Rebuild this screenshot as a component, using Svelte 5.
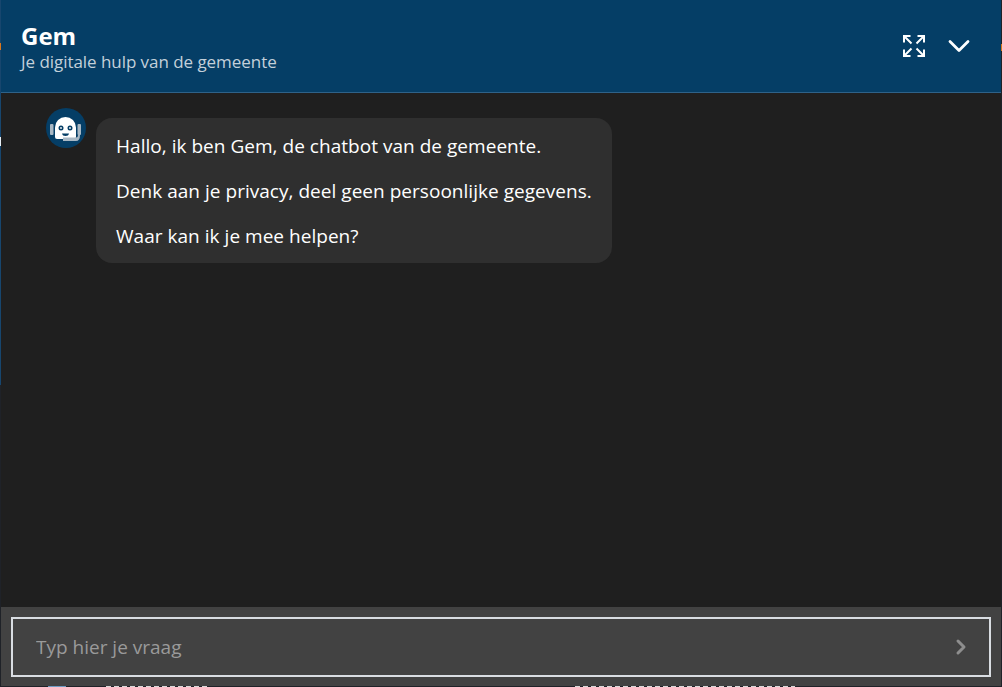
<script lang="ts">
  const messages = [
    "Hallo, ik ben Gem, de chatbot van de gemeente.",
    "Denk aan je privacy, deel geen persoonlijke gegevens.",
    "Waar kan ik je mee helpen?",
  ];
</script>

<div class="page">
  <div class="widget">
    <header class="head">
      <div class="titles">
        <h1>Gem</h1>
        <p>Je digitale hulp van de gemeente</p>
      </div>
      <div class="actions">
        <button aria-label="Vergroten">
          <svg width="22" height="22" viewBox="0 0 22 22" fill="none" stroke="#fff" stroke-width="2">
            <path d="M1 7.500V1h6.500M2 2l6.500 6.500" />
            <path d="M21 7.500V1h-6.500M20 2l-6.500 6.500" />
            <path d="M1 14.500V21h6.500M2 20l6.500-6.500" />
            <path d="M21 14.500V21h-6.500M20 20l-6.500-6.500" />
          </svg>
        </button>
        <button aria-label="Sluiten">
          <svg width="22" height="14" viewBox="0 0 22 14" fill="none">
            <path d="M2 2.500l9 9 9-9" stroke="#fff" stroke-width="2.800" stroke-linecap="round" stroke-linejoin="round" />
          </svg>
        </button>
      </div>
    </header>

    <main class="chat">
      <div class="avatar">
        <svg width="40" height="40" viewBox="0 0 40 40">
          <circle cx="20" cy="20" r="20" fill="#053e66" />
          <rect x="4" y="16" width="3.500" height="11" rx="1" fill="#a9b8c4" />
          <rect x="31.500" y="16" width="3.500" height="11" rx="1" fill="#a9b8c4" />
          <path d="M9 19.500a10.500 10.500 0 0 1 21 0v9q0 2.500-2.500 2.500H11q-2 0-2-2z" fill="#fff" />
          <circle cx="15" cy="20" r="2.500" fill="#053e66" />
          <circle cx="24" cy="20" r="2.500" fill="#053e66" />
          <circle cx="15" cy="20" r="0.900" fill="#fff" />
          <circle cx="24" cy="20" r="0.900" fill="#fff" />
          <path d="M16 25.500h7q-0.500 2.500-3.500 2.500t-3.500-2.500z" fill="#053e66" />
          <path d="M17 29.500h13q2 0 2-2.500h2q0 6-4 6H17z" fill="#a9b8c4" />
        </svg>
      </div>
      <div class="bubble">
        {#each messages as line}
          <p>{line}</p>
        {/each}
      </div>
    </main>

    <footer class="foot">
      <div class="field">
        <input type="text" placeholder="Typ hier je vraag" />
        <svg width="12" height="18" viewBox="0 0 12 18" fill="none">
          <path d="M3 3l6 6-6 6" stroke="#8e8e8e" stroke-width="3" stroke-linecap="round" stroke-linejoin="round" />
        </svg>
      </div>
    </footer>
  </div>
  <!-- sliver of the page behind the widget -->
  <div class="behind" aria-hidden="true">
    <span class="mark"></span>
    <span class="dash a"></span>
    <span class="dash b"></span>
  </div>
</div>

<style>
  :global(body) {
    margin: 0;
    background: #1f2228;
    font-family: "Open Sans", "Noto Sans", sans-serif;
  }

  .page {
    position: relative;
    height: 687px;
    overflow: hidden;
    padding-left: 1px;
    box-sizing: border-box;
    background:
      linear-gradient(#e8eef4, #e8eef4) 0 137px / 1px 9px no-repeat,
      linear-gradient(#d9761c, #d9761c) 0 43px / 1px 7px no-repeat,
      linear-gradient(#d9761c, #d9761c) 1001px 44px / 1px 7px no-repeat,
      linear-gradient(#17466e, #17466e) 0 0 / 1px 385px no-repeat,
      #1f2228;
  }

  .widget {
    width: 1000px;
    height: 686px;
    display: flex;
    flex-direction: column;
    background: #1f1f1f;
  }

  .head {
    height: 92px;
    flex: none;
    display: flex;
    align-items: center;
    justify-content: space-between;
    padding: 0 31px 0 20px;
    background: #053e66;
    border-bottom: 1px solid #2f6288;
  }

  .titles {
    padding-top: 3px;
  }

  h1 {
    margin: 0;
    font-size: 24px;
    line-height: 28px;
    font-weight: 700;
    color: #fff;
  }

  .titles p {
    margin: 0;
    font-size: 17px;
    line-height: 24px;
    letter-spacing: -0.05px;
    color: #c3d0da;
  }

  .actions {
    display: flex;
    align-items: center;
    gap: 23px;
  }

  button {
    display: flex;
    padding: 0;
    border: 0;
    background: none;
  }

  .chat {
    flex: 1;
    display: flex;
    align-items: flex-start;
    gap: 10px;
    padding: 15px 0 0 45px;
  }

  .bubble {
    margin-top: 10px;
    padding: 16px 20px 15px;
    border-radius: 16px;
    background: #2f2f2f;
    color: #fff;
    font-size: 19px;
    line-height: 24px;
    letter-spacing: 0.03px;
  }

  .bubble p {
    margin: 0 0 21px;
  }

  .bubble p:last-child {
    margin-bottom: 0;
  }

  .foot {
    height: 79px;
    flex: none;
    box-sizing: border-box;
    padding: 10px 10px 9px;
    background: #424242;
  }

  .field {
    height: 100%;
    box-sizing: border-box;
    display: flex;
    align-items: center;
    padding: 0 22px 0 23px;
    border: 2px solid #d9dde2;
  }

  input {
    flex: 1;
    padding: 0;
    border: 0;
    outline: 0;
    background: none;
    color: #fff;
    font: inherit;
    font-size: 19px;
  }

  input::placeholder {
    color: #9a9a9a;
    opacity: 1;
  }

  .behind {
    position: absolute;
    left: 0;
    top: 686px;
    width: 1002px;
    height: 1px;
  }

  .behind span {
    position: absolute;
    top: 0;
    height: 1px;
  }

  .mark {
    left: 48px;
    width: 18px;
    background: #6f9cc4;
  }

  .dash {
    background: repeating-linear-gradient(90deg, #d8d8d8 0 5px, #1f2228 5px 8px);
  }

  .a {
    left: 106px;
    width: 104px;
  }

  .b {
    left: 575px;
    width: 220px;
  }
</style>
